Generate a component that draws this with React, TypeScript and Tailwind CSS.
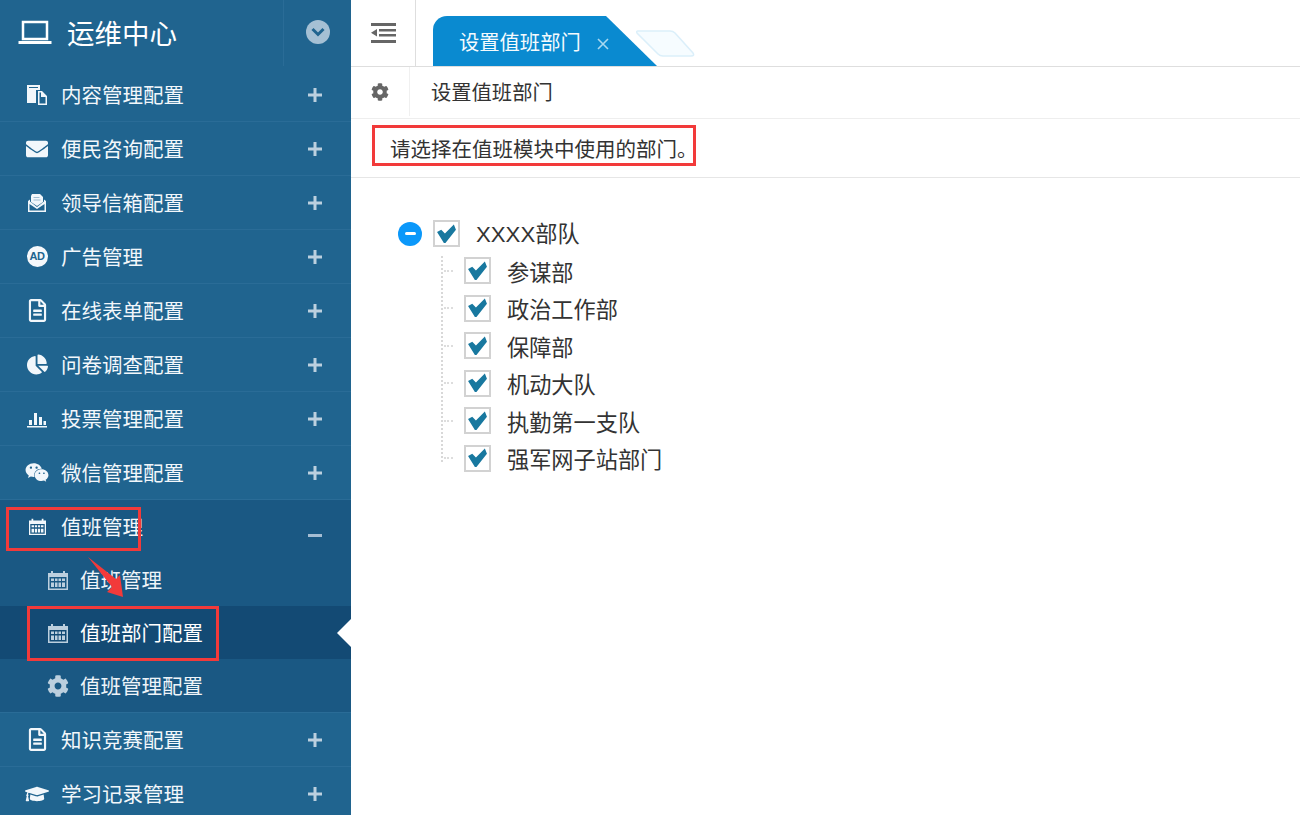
import type { ReactNode } from "react";
import {
  FaChartPie,
  FaCog,
  FaEnvelope,
  FaGraduationCap,
  FaRegFileAlt,
  FaWeixin,
} from "react-icons/fa";

const FONT = "font-['Microsoft_YaHei','Noto_Sans_CJK_SC','Noto_Sans',sans-serif]";

function CopyIcon() {
  return (
    <svg viewBox="0 0 22 22" className="h-[22px] w-[22px]" fill="currentColor">
      <path d="M1 1h13v5H10v13H1z" />
      <path d="M12 7h4l5 5v9H12zM13.500 8.500v11h6v-6.500h-4.500V8.500z" fillRule="evenodd" />
      <path d="M3 3h9v1H3z" fill="#20648f" />
    </svg>
  );
}

function MailOpenIcon() {
  return (
    <svg viewBox="0 0 20 20" className="h-5 w-5" fill="currentColor">
      <path d="M5 1h8l3 3v5l-6 4-6-4V3z" />
      <path d="M6.500 4h6v1h-6zM6.500 6.500h7v1h-7z" fill="#9fbdd2" />
      <path fillRule="evenodd" d="M1 8l2-1.500v2L10 14l7-5.500v-2L19 8v11H1zM2.500 11v6.500h15V11L10 16z" />
    </svg>
  );
}

function ChartIcon() {
  return (
    <svg viewBox="0 0 22 20" className="h-5 w-[22px]" fill="currentColor">
      <path d="M1 17h20v1.500H1zM3 11h3v5H3zM8 4h3v12H8zM13 8h3v8h-3zM17.500 12h2.500v4h-2.500z" />
    </svg>
  );
}

function CalendarIcon({ small }: { small?: boolean }) {
  return (
    <svg viewBox="0 0 22 20" className={small ? "h-[17px] w-[19px]" : "h-5 w-[22px]"} fill="currentColor">
      <path
        fillRule="evenodd"
        d="M1 3h3V1h2v2h10V1h2v2h3v17H1zM2.500 7v11.500h17V7zM4 8.500h3v2.500H4zM8 8.500h2.500v2.500H8zM11.500 8.500H14v2.500h-2.500zM15 8.500h3v2.500h-3zM4 12.500h3V17H4zM8 12.500h2.500V17H8zM11.500 12.500H14V17h-2.500zM15 12.500h3V17h-3z"
      />
    </svg>
  );
}

function AdIcon() {
  return (
    <span className="flex h-[21px] w-[21px] items-center justify-center rounded-full bg-[#f5f8fb] font-['Liberation_Sans',sans-serif] text-[11px] font-bold tracking-[-0.5px] text-[#20648f]">
      AD
    </span>
  );
}

const TOP_ITEMS: { label: string; icon: ReactNode }[] = [
  { label: "内容管理配置", icon: <CopyIcon /> },
  { label: "便民咨询配置", icon: <FaEnvelope size={22} /> },
  { label: "领导信箱配置", icon: <MailOpenIcon /> },
  { label: "广告管理", icon: <AdIcon /> },
  { label: "在线表单配置", icon: <FaRegFileAlt size={23} /> },
  { label: "问卷调查配置", icon: <FaChartPie size={21} /> },
  { label: "投票管理配置", icon: <ChartIcon /> },
  { label: "微信管理配置", icon: <FaWeixin size={25} /> },
];

const BOTTOM_ITEMS: { label: string; icon: ReactNode }[] = [
  { label: "知识竞赛配置", icon: <FaRegFileAlt size={23} /> },
  { label: "学习记录管理", icon: <FaGraduationCap size={32} /> },
];

const SUB_ITEMS: { label: string; icon: ReactNode; active?: boolean }[] = [
  { label: "值班管理", icon: <CalendarIcon /> },
  { label: "值班部门配置", icon: <CalendarIcon />, active: true },
  { label: "值班管理配置", icon: <FaCog size={22} /> },
];

const DEPARTMENTS = ["参谋部", "政治工作部", "保障部", "机动大队", "执勤第一支队", "强军网子站部门"];

function MenuItem({ label, icon }: { label: string; icon: ReactNode }) {
  return (
    <div className="flex h-[54px] shrink-0 items-center border-b border-[#2a6c97] pl-[25px] pr-[29px] text-[#f2f7fb]">
      <span className="flex w-[24px] justify-center">{icon}</span>
      <span className="ml-[12px] flex-1 text-[20.500px]">{label}</span>
      <span className="text-[#bcd0df]">
        <PlusIcon />
      </span>
    </div>
  );
}

function PlusIcon() {
  return (
    <svg viewBox="0 0 14 14" className="h-[14px] w-[14px]" fill="currentColor">
      <path d="M5.500 0h3v5.500H14v3H8.500V14h-3V8.500H0v-3h5.500z" />
    </svg>
  );
}

function Checkbox() {
  return (
    <span className="flex h-[27px] w-[27px] shrink-0 items-center justify-center border-2 border-[#d2d2d2] bg-white">
      <svg viewBox="0 0 20 18" className="h-[20px] w-[21px]" fill="#18789f">
        <path d="M1 7l4-2 3.500 3.500L17 0l2 5L9 17.500H7.500z" />
      </svg>
    </span>
  );
}

function Sidebar() {
  return (
    <aside className="flex h-full w-[351px] shrink-0 flex-col overflow-hidden bg-[#20648f]">
      <div className="flex h-[68px] shrink-0 items-center">
        <div className="flex flex-1 items-center pb-[3px] pl-[18px] text-white">
          <svg viewBox="0 0 34 26" className="h-[26px] w-[34px]" fill="none" stroke="currentColor">
            <path d="M5 2h24v17H5z" strokeWidth="2.500" />
            <path d="M0.500 22.500h33" strokeWidth="3" />
          </svg>
          <span className="ml-[15px] text-[27.500px]">运维中心</span>
        </div>
        <div className="flex h-[66px] w-[68px] items-center justify-center self-start border-l border-[#2a6c97] pb-[2px]">
          <span className="flex h-6 w-6 items-center justify-center rounded-full bg-[#a5c0d4]">
            <svg
              viewBox="0 0 14 10"
              className="h-[10px] w-[14px]"
              fill="none"
              stroke="#20648f"
              strokeWidth="3"
            >
              <path d="M1.500 2l5.500 5.500L12.500 2" />
            </svg>
          </span>
        </div>
      </div>

      {TOP_ITEMS.map((item) => (
        <MenuItem key={item.label} {...item} />
      ))}

      <div className="flex h-[213px] shrink-0 flex-col border-b border-[#2a6c97] bg-[#1a5883]">
        <div className="relative flex h-[53px] items-center pl-[25px] pr-[29px] text-[#f2f7fb]">
          <span className="flex w-[24px] justify-center">
            <CalendarIcon small />
          </span>
          <span className="ml-[12px] flex-1 text-[20.500px]">值班管理</span>
          <span className="mt-[18px] h-[3px] w-[14px] bg-[#a5bdd3]" />
        </div>
        {SUB_ITEMS.map((sub) => (
          <div
            key={sub.label}
            className={`relative flex h-[53px] items-center pl-[46px] ${
              sub.active ? "bg-[#134a74] text-white" : "text-[#eef4f9]"
            }`}
          >
            <span className="flex w-[24px] justify-center text-[#bccfde]">{sub.icon}</span>
            <span className="ml-[10px] text-[20.500px]">{sub.label}</span>
            {sub.active ? (
              <span className="absolute right-0 top-[13px] h-0 w-0 border-y-[14px] border-r-[14px] border-y-transparent border-r-white" />
            ) : null}
          </div>
        ))}
      </div>

      {BOTTOM_ITEMS.map((item) => (
        <MenuItem key={item.label} {...item} />
      ))}
    </aside>
  );
}

function TopBar() {
  return (
    <div className="relative flex h-[67px] shrink-0 border-b border-[#dedede]">
      <div className="flex h-full w-[65px] items-center justify-center border-r border-[#dedede]">
        <svg viewBox="0 0 25 20" className="h-5 w-[25px]" fill="#666666">
          <path d="M0 0h25v3H0zM8 6h17v2.500H8zM8 11h17v2.500H8zM0 17h25v3H0zM6 6v7.500L0 9.700z" />
        </svg>
      </div>
      <div className="ml-[17px] mt-[16px] flex h-[50px] w-[224px] items-center rounded-tl-[14px] bg-[#0a8ad0] pl-[26px] text-[#f4fafd] [clip-path:polygon(0_0,173px_0,224px_100%,0_100%)]">
        <span className="text-[20.300px]">设置值班部门</span>
        <span className="ml-[16px] mt-[6px] text-[#a8d8f0]">
          <svg viewBox="0 0 12 12" className="h-3 w-3" fill="none" stroke="currentColor" strokeWidth="1.600">
            <path d="M1 1l10 10M11 1L1 11" />
          </svg>
        </span>
      </div>
      {/* the empty second tab peeking out behind the active one */}
      <svg viewBox="0 0 60 28" className="absolute left-[284px] top-[30px] h-[28px] w-[60px]" fill="#f6fcff" stroke="#dbeffa" strokeWidth="1.500">
        <path d="M3 1h32q3 0 5 2l18 20q2 3-2 3H28q-3 0-5-2L2 3Q1 1 3 1z" />
      </svg>
    </div>
  );
}

function DepartmentTree() {
  return (
    <div className="relative pl-[47px] pt-[41px] text-[#333333]">
      <div className="flex h-[29px] items-center">
        <span className="flex h-6 w-6 items-center justify-center rounded-full bg-[#0b98fa]">
          <span className="h-[3px] w-[11px] rounded-sm bg-white" />
        </span>
        <span className="ml-[11px]">
          <Checkbox />
        </span>
        <span className="ml-[16px] text-[22.200px] leading-none">
          <span className="font-['Liberation_Sans',sans-serif]">XXXX</span>部队
        </span>
      </div>
      <div className="relative ml-[66px] pt-[4px]">
        <span className="absolute -left-[23px] top-[8px] h-[206px] border-l-2 border-dotted border-[#d8d8d8]" />
        {DEPARTMENTS.map((dept) => (
          <div key={dept} className="relative flex h-[37.500px] items-center">
            <span className="absolute -left-[20px] w-[9px] border-t-2 border-dotted border-[#dddddd]" />
            <Checkbox />
            <span className="ml-[16px] text-[22.200px] leading-none">{dept}</span>
          </div>
        ))}
      </div>
    </div>
  );
}

function Annotations() {
  return (
    <>
      <div className="absolute left-[6px] top-[507px] h-[44px] w-[135px] border-[3px] border-[#f23a3a]" />
      <div className="absolute left-[27px] top-[606px] h-[55px] w-[192px] border-[3px] border-[#f23a3a]" />
      <div className="absolute left-[372px] top-[125px] h-[41px] w-[324px] border-[3px] border-[#f23a3a]" />
      <svg viewBox="0 0 40 44" className="absolute left-[86px] top-[557px] h-[44px] w-[40px]" fill="#f23a3a">
        <path d="M2 0l28 22 4-4 3 22-16-5 5-5z" />
      </svg>
    </>
  );
}

export default function App() {
  return (
    <div className={`relative flex h-[815px] w-[1300px] overflow-hidden bg-white ${FONT}`}>
      <Sidebar />
      <main className="flex min-w-0 flex-1 flex-col">
        <TopBar />
        <div className="flex h-[52px] shrink-0 items-center border-b border-[#eeeeee] pb-[2px]">
          <div className="flex h-full w-[59px] items-center justify-center border-r border-[#f0f0f0] text-[#666666]">
            <FaCog size={18} />
          </div>
          <span className="ml-[21px] text-[20.300px] text-[#333333]">设置值班部门</span>
        </div>
        <div className="flex h-[59px] shrink-0 items-center border-b border-[#e6e6e6] pl-[39px] text-[20.500px] text-[#333333]">
          请选择在值班模块中使用的部门。
        </div>
        <DepartmentTree />
      </main>
      <Annotations />
    </div>
  );
}
